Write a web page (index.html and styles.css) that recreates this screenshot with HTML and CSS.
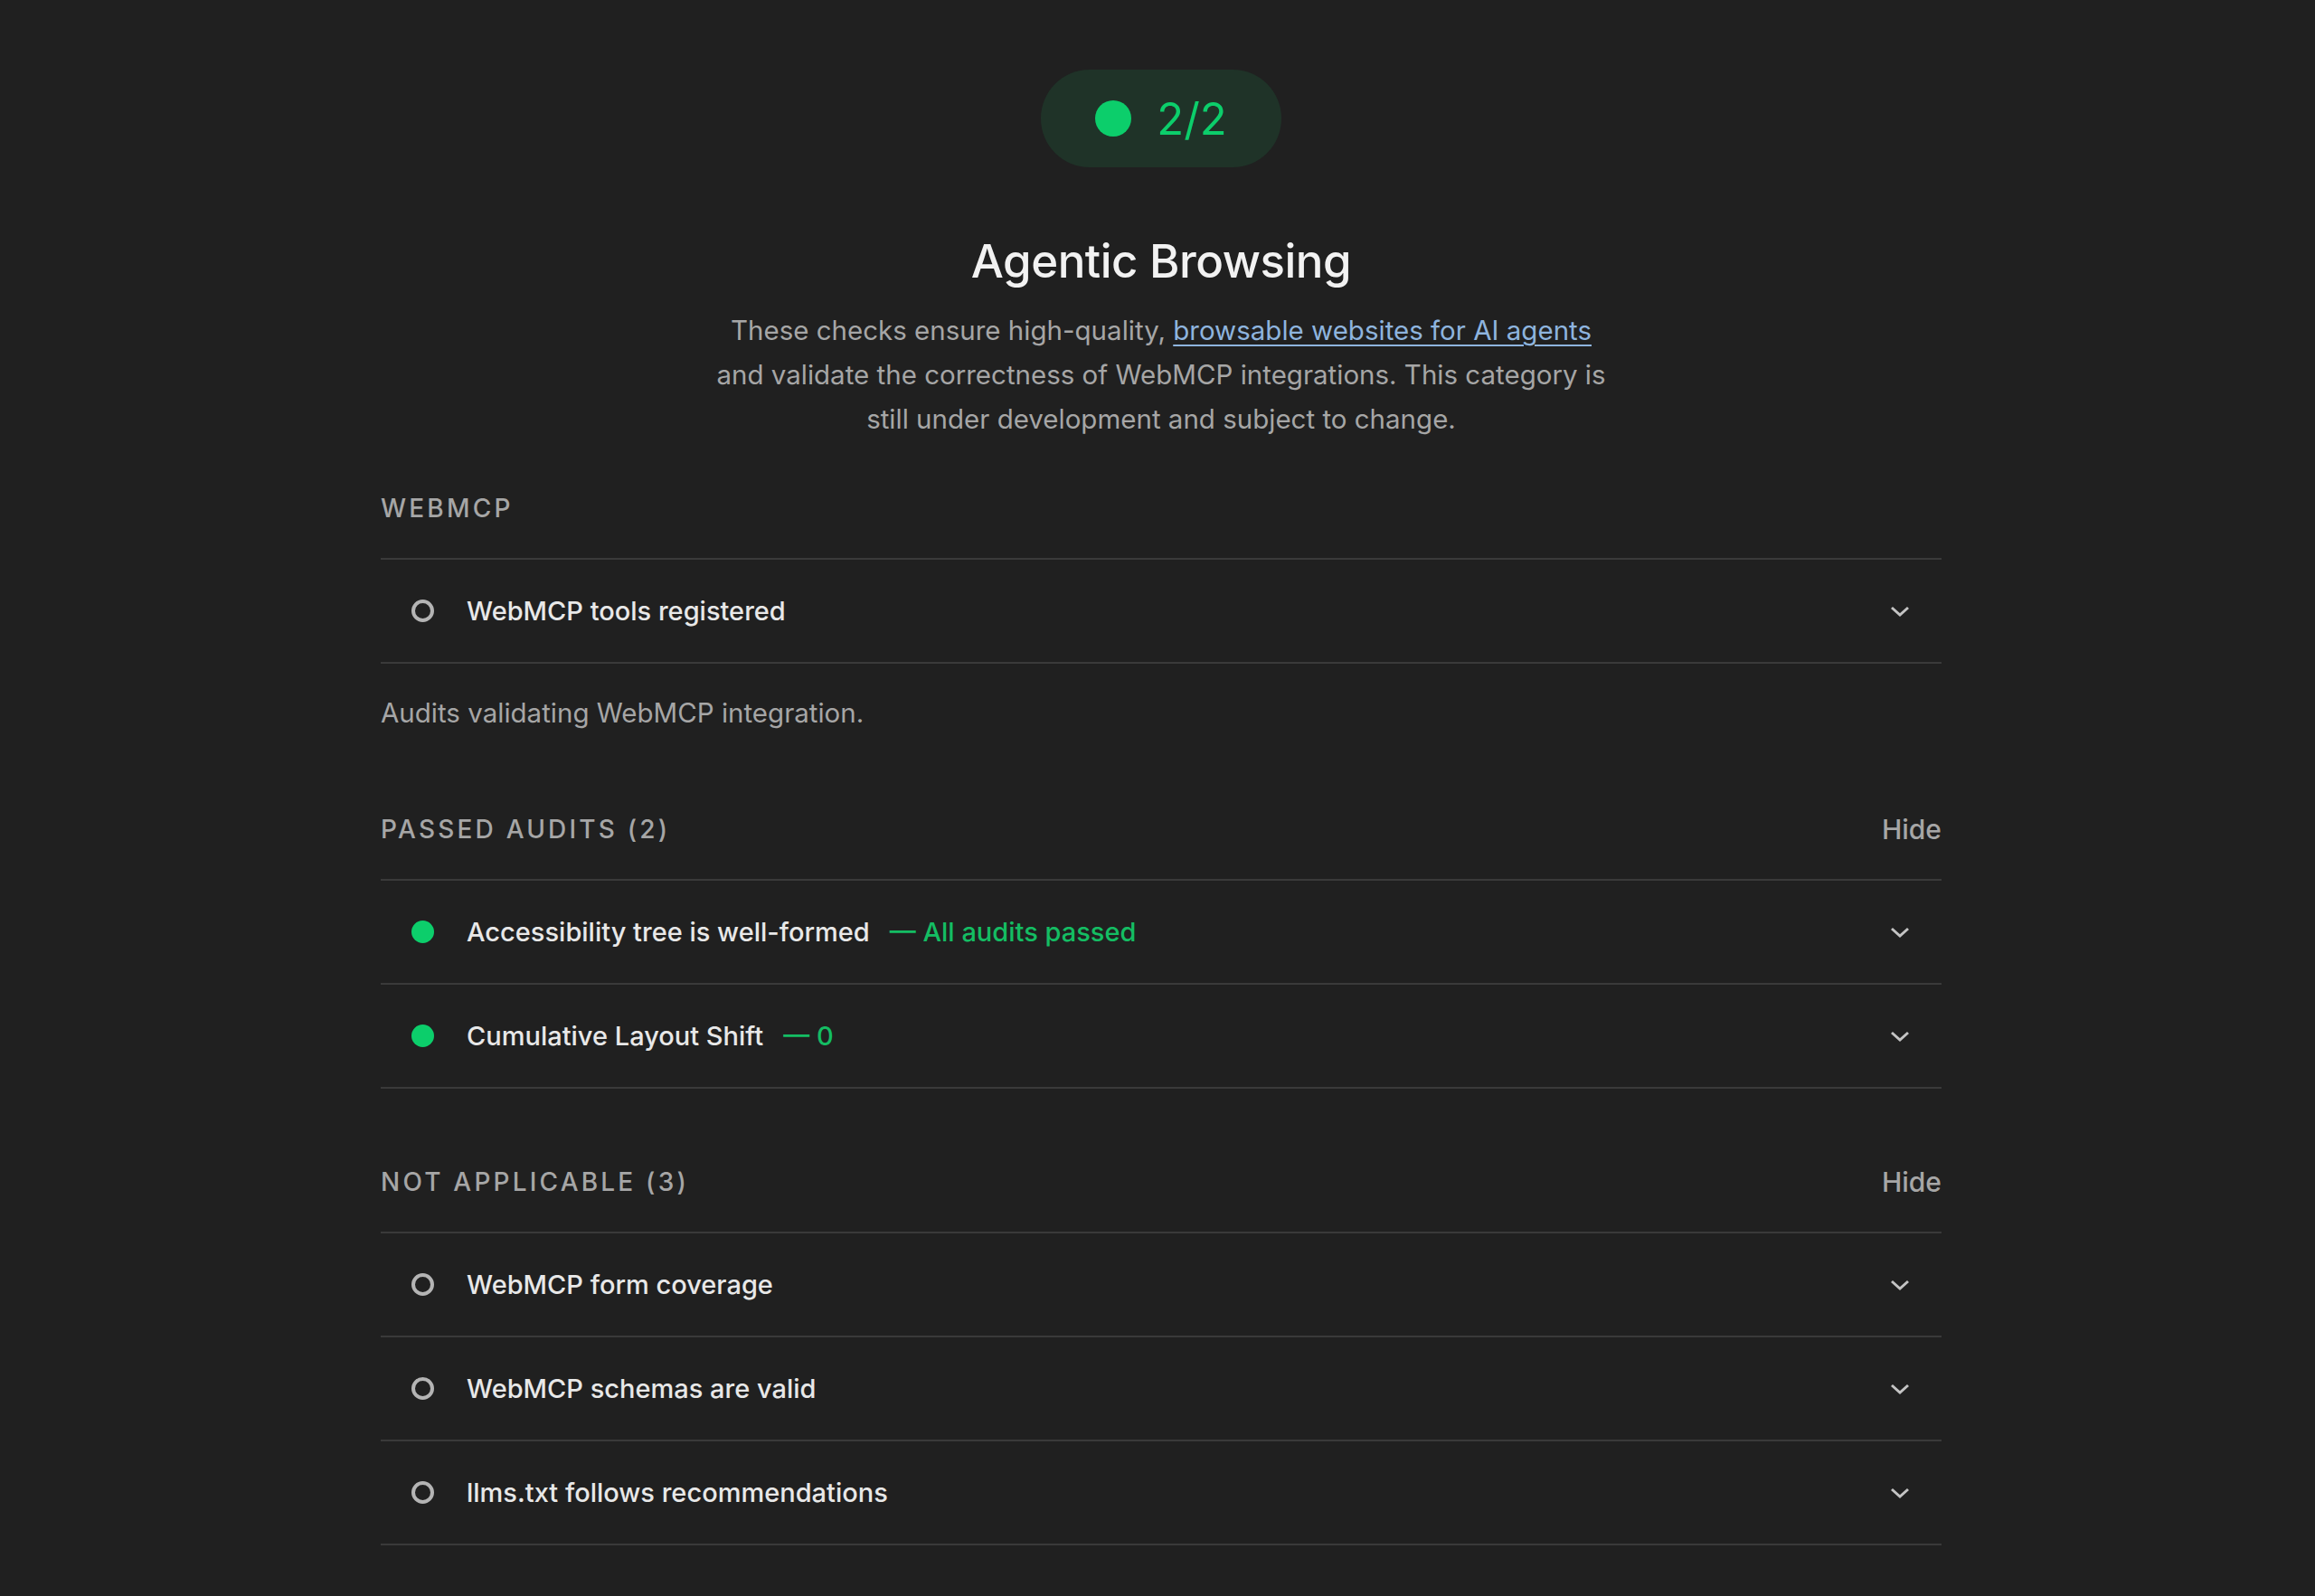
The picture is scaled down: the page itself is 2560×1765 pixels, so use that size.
FILE: index.html
```html
<!DOCTYPE html>
<html lang="en">
<head>
    <meta charset="UTF-8">
    <meta name="viewport" content="width=device-width, initial-scale=1.0">
    <title>Agentic Browsing</title>
    <link rel="stylesheet" href="styles.css">
</head>
<body>
    <div class="category">
        <div class="category-header">
            <div class="gauge">
                <span class="gauge-dot"></span>
                <span class="gauge-score">2/2</span>
            </div>
            <h1 class="category-title">Agentic Browsing</h1>
            <p class="category-desc">These checks ensure high-quality, <a href="#">browsable websites for AI agents</a><br>and validate the correctness of WebMCP integrations. This category is<br>still under development and subject to change.</p>
        </div>

        <!-- WebMCP group -->
        <div class="group">
            <div class="group-header">
                <span class="group-title">WebMCP</span>
            </div>
            <div class="audit">
                <span class="audit-icon na"></span>
                <span class="audit-title">WebMCP tools registered</span>
                <svg class="chevron" viewBox="0 0 24 14"><path d="M3 3l9 8 9-8"/></svg>
            </div>
            <p class="group-desc">Audits validating WebMCP integration.</p>
        </div>

        <!-- Passed -->
        <div class="group clump">
            <div class="group-header">
                <span class="group-title">Passed audits (2)</span>
                <span class="group-toggle">Hide</span>
            </div>
            <div class="audit">
                <span class="audit-icon pass"></span>
                <span class="audit-title">Accessibility tree is well-formed</span>
                <span class="audit-value">&mdash; All audits passed</span>
                <svg class="chevron" viewBox="0 0 24 14"><path d="M3 3l9 8 9-8"/></svg>
            </div>
            <div class="audit">
                <span class="audit-icon pass"></span>
                <span class="audit-title">Cumulative Layout Shift</span>
                <span class="audit-value">&mdash; 0</span>
                <svg class="chevron" viewBox="0 0 24 14"><path d="M3 3l9 8 9-8"/></svg>
            </div>
        </div>

        <!-- Not applicable -->
        <div class="group clump">
            <div class="group-header">
                <span class="group-title">Not applicable (3)</span>
                <span class="group-toggle">Hide</span>
            </div>
            <div class="audit">
                <span class="audit-icon na"></span>
                <span class="audit-title">WebMCP form coverage</span>
                <svg class="chevron" viewBox="0 0 24 14"><path d="M3 3l9 8 9-8"/></svg>
            </div>
            <div class="audit">
                <span class="audit-icon na"></span>
                <span class="audit-title">WebMCP schemas are valid</span>
                <svg class="chevron" viewBox="0 0 24 14"><path d="M3 3l9 8 9-8"/></svg>
            </div>
            <div class="audit">
                <span class="audit-icon na"></span>
                <span class="audit-title">llms.txt follows recommendations</span>
                <svg class="chevron" viewBox="0 0 24 14"><path d="M3 3l9 8 9-8"/></svg>
            </div>
        </div>
    </div>
</body>
</html>
```

FILE: styles.css
```css
:root {
    --bg: #202020;
    --text: #e8e8e8;
    --text-secondary: #a6a6a6;
    --divider: #3a3a3a;
    --pass: #0cce6b;
    --pass-text: #14bd63;
    --pass-fill: #1f3328;
    --link: #8eb4de;
}

* {
    box-sizing: border-box;
    margin: 0;
    padding: 0;
}

body {
    font-family: Inter, 'Noto Sans', sans-serif;
    background-color: var(--bg);
    color: var(--text);
    padding-top: 77px;
    padding-left: 8px;
}

.category {
    width: 1726px;
    margin: 0 auto;
    padding-bottom: 60px;
}

.category-header {
    display: flex;
    flex-direction: column;
    align-items: center;
    text-align: center;
}

.gauge {
    display: flex;
    align-items: center;
    justify-content: center;
    gap: 28px;
    width: 266px;
    height: 108px;
    border-radius: 54px;
    background-color: var(--pass-fill);
}

.gauge-dot {
    width: 40px;
    height: 40px;
    border-radius: 50%;
    background-color: var(--pass);
}

.gauge-score {
    font-size: 49px;
    color: var(--pass);
    line-height: 1;
}

.category-title {
    margin-top: 74px;
    font-size: 51px;
    font-weight: 500;
    line-height: 60px;
    color: #f2f2f2;
    letter-spacing: -0.5px;
}

.category-desc {
    margin-top: 22px;
    font-size: 29.5px;
    line-height: 49px;
    color: var(--text-secondary);
}

.category-desc a {
    color: var(--link);
    text-decoration: underline;
    text-underline-offset: 5px;
    text-decoration-thickness: 2px;
}

.group {
    margin-top: 54px;
}

.group.clump {
    margin-top: 89px;
}

.group.clump + .group.clump {
    margin-top: 83px;
}

.group-header {
    display: flex;
    justify-content: space-between;
    align-items: center;
    line-height: 40px;
    padding-bottom: 35px;
    border-bottom: 2px solid var(--divider);
}

.group-title {
    font-size: 28px;
    font-weight: 500;
    text-transform: uppercase;
    letter-spacing: 3.2px;
    color: var(--text-secondary);
}

.group-toggle {
    font-size: 30px;
    font-weight: 500;
    color: var(--text-secondary);
}

.audit {
    display: flex;
    align-items: center;
    height: 115px;
    padding: 0 34px;
    border-bottom: 2px solid var(--divider);
}

.audit-icon {
    flex: none;
    width: 25px;
    height: 25px;
    border-radius: 50%;
    margin-right: 36px;
}

.audit-icon.na {
    border: 4px solid #b4b4b4;
}

.audit-icon.pass {
    background-color: var(--pass);
}

.audit-title {
    font-size: 29px;
    font-weight: 500;
    color: var(--text);
}

.audit-value {
    margin-left: 22px;
    font-size: 29px;
    font-weight: 500;
    color: var(--pass-text);
}

.chevron {
    margin-left: auto;
    width: 24px;
    height: 14px;
    fill: none;
    stroke: #c4c4c4;
    stroke-width: 3;
}

.group-desc {
    margin-top: 34px;
    font-size: 29.5px;
    line-height: 40px;
    color: var(--text-secondary);
}
```
